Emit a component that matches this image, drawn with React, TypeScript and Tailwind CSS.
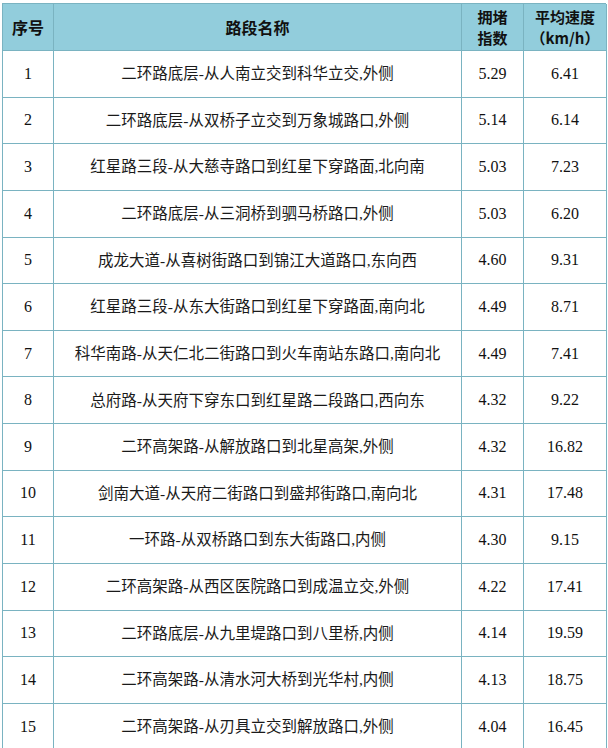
import React from "react";

type Row = { name: string; index: string; speed: string };

const ROWS: Row[] = [
  { name: "二环路底层-从人南立交到科华立交,外侧", index: "5.29", speed: "6.41" },
  { name: "二环路底层-从双桥子立交到万象城路口,外侧", index: "5.14", speed: "6.14" },
  { name: "红星路三段-从大慈寺路口到红星下穿路面,北向南", index: "5.03", speed: "7.23" },
  { name: "二环路底层-从三洞桥到驷马桥路口,外侧", index: "5.03", speed: "6.20" },
  { name: "成龙大道-从喜树街路口到锦江大道路口,东向西", index: "4.60", speed: "9.31" },
  { name: "红星路三段-从东大街路口到红星下穿路面,南向北", index: "4.49", speed: "8.71" },
  { name: "科华南路-从天仁北二街路口到火车南站东路口,南向北", index: "4.49", speed: "7.41" },
  { name: "总府路-从天府下穿东口到红星路二段路口,西向东", index: "4.32", speed: "9.22" },
  { name: "二环高架路-从解放路口到北星高架,外侧", index: "4.32", speed: "16.82" },
  { name: "剑南大道-从天府二街路口到盛邦街路口,南向北", index: "4.31", speed: "17.48" },
  { name: "一环路-从双桥路口到东大街路口,内侧", index: "4.30", speed: "9.15" },
  { name: "二环高架路-从西区医院路口到成温立交,外侧", index: "4.22", speed: "17.41" },
  { name: "二环路底层-从九里堤路口到八里桥,内侧", index: "4.14", speed: "19.59" },
  { name: "二环高架路-从清水河大桥到光华村,内侧", index: "4.13", speed: "18.75" },
  { name: "二环高架路-从刃具立交到解放路口,外侧", index: "4.04", speed: "16.45" },
];

const cell =
  "flex items-center justify-center border-r border-b border-[#7ab3c1] text-center";
const cjk = "font-['Noto_Sans_CJK_SC',sans-serif]";
const serif = "font-['Liberation_Serif','Noto_Sans_CJK_SC',serif]";

export default function App() {
  return (
    <div className="h-[748px] w-[608px] overflow-hidden bg-white">
      <div className="ml-[2px] mt-[3px] grid w-[604px] grid-cols-[51px_408px_62px_83px] border-l border-t border-[#7ab3c1] text-[#111]">
        {/* 表头 */}
        <div className={`${cell} h-[47px] bg-[#92cddc] text-[16px] font-bold ${cjk}`}>
          序号
        </div>
        <div className={`${cell} h-[47px] bg-[#92cddc] text-[16px] font-bold ${cjk}`}>
          路段名称
        </div>
        <div
          className={`${cell} h-[47px] flex-col bg-[#92cddc] text-[15px] font-bold leading-[21px] ${cjk}`}
        >
          <span>拥堵</span>
          <span>指数</span>
        </div>
        <div
          className={`${cell} h-[47px] flex-col bg-[#92cddc] text-[15px] font-bold leading-[21px] ${cjk}`}
        >
          <span>平均速度</span>
          <span>（km/h）</span>
        </div>

        {ROWS.map((r, i) => (
          <React.Fragment key={i}>
            <div className={`${cell} h-[46.64px] text-[16px] ${serif}`}>{i + 1}</div>
            <div className={`${cell} h-[46.64px] text-[15.5px] text-[#1a1a1a] ${serif}`}>
              {r.name}
            </div>
            <div className={`${cell} h-[46.64px] text-[16px] ${serif}`}>{r.index}</div>
            <div className={`${cell} h-[46.64px] text-[16px] ${serif}`}>{r.speed}</div>
          </React.Fragment>
        ))}
      </div>
    </div>
  );
}
